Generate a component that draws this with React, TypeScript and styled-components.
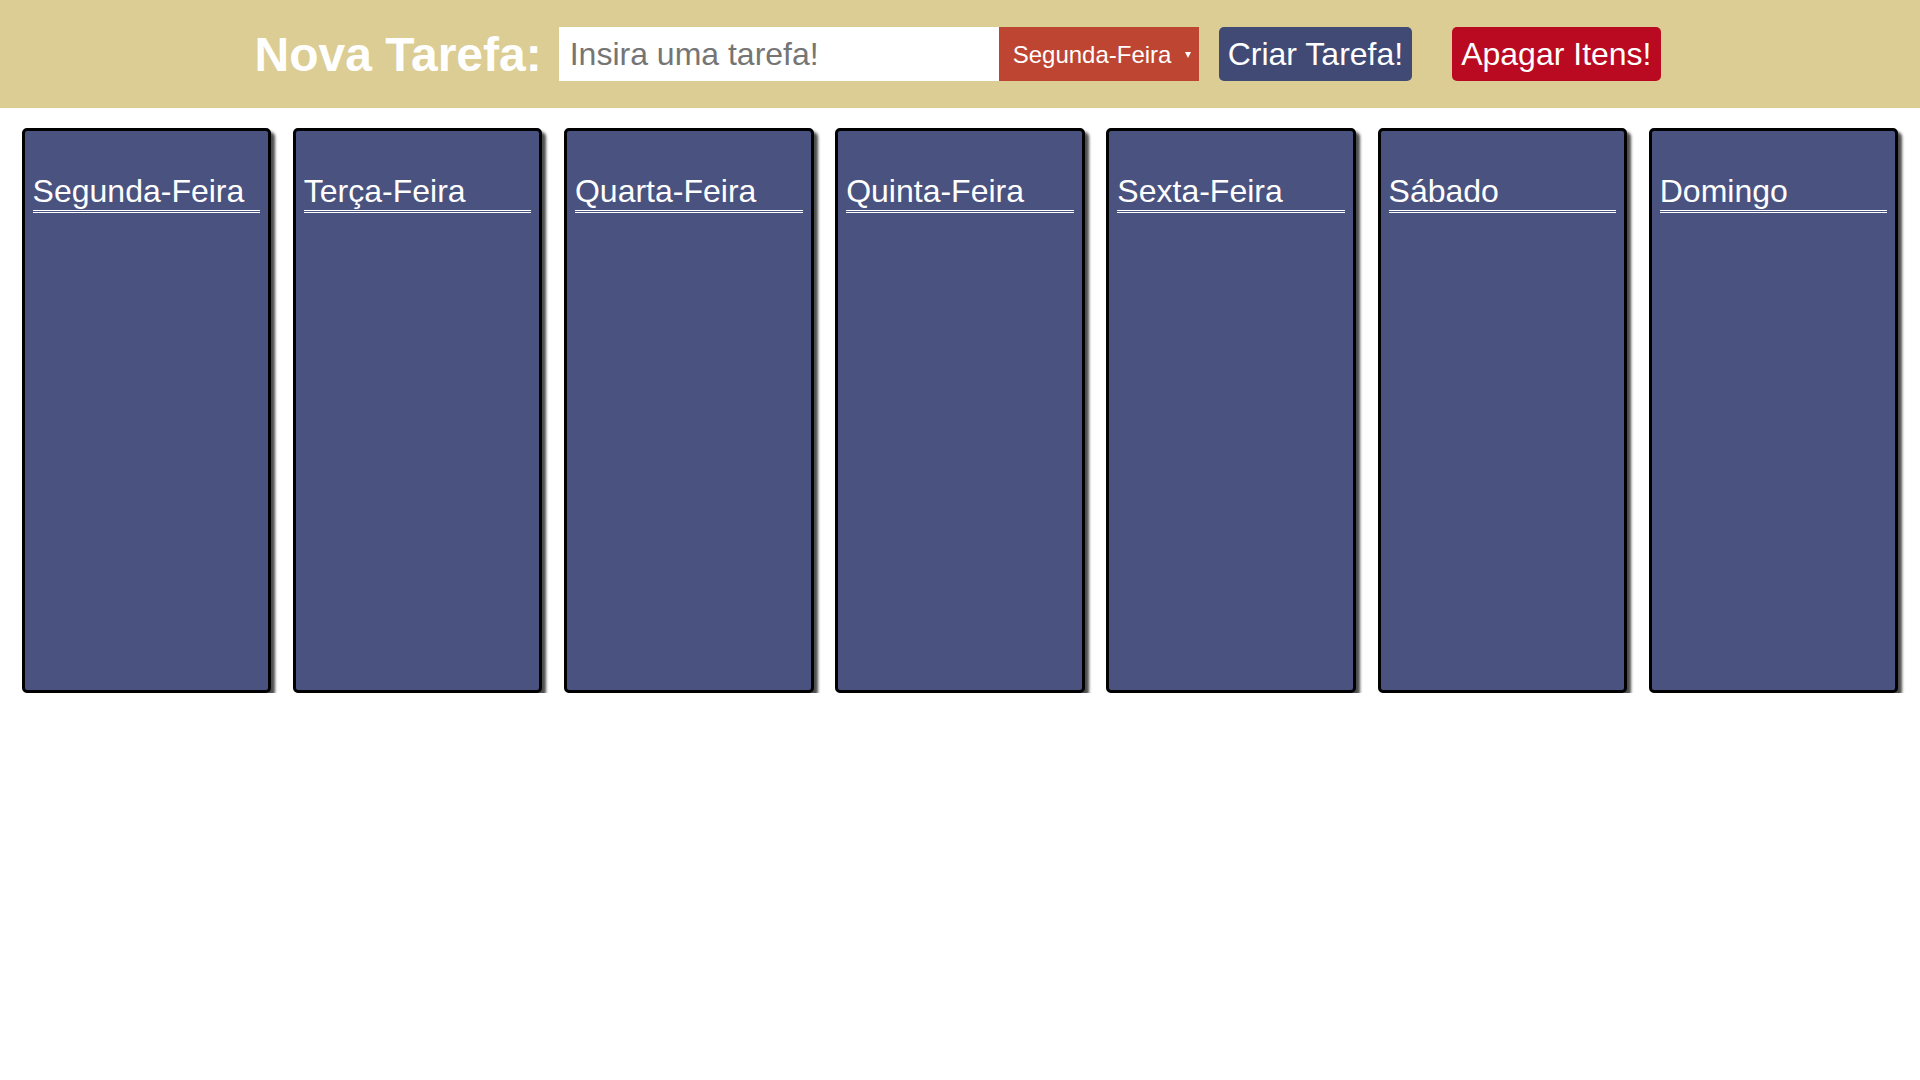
import styled, { createGlobalStyle } from "styled-components";

const GlobalStyle = createGlobalStyle`
  * {
    box-sizing: border-box;
  }

  body {
    margin: 0;
    background: #ffffff;
    font-family: "Liberation Sans", Arial, sans-serif;
  }
`;

const Header = styled.header`
  height: 108px;
  padding-right: 5px;
  background: #dbcd94;
  display: flex;
  align-items: center;
  justify-content: center;
`;

const Title = styled.h1`
  margin: 0 17px 0 0;
  font-size: 48px;
  font-weight: bold;
  color: #ffffff;
`;

const TaskInput = styled.input`
  width: 440px;
  height: 54px;
  border: none;
  border-radius: 0;
  padding: 0 11px;
  font-family: inherit;
  font-size: 32px;
  color: #333;
  background: #ffffff;
  outline: none;

  &::placeholder {
    color: #757575;
  }
`;

const SelectWrap = styled.div`
  position: relative;
  width: 200px;
  height: 54px;

  &::after {
    content: "";
    position: absolute;
    right: 8px;
    top: 25px;
    border-left: 3.5px solid transparent;
    border-right: 3.5px solid transparent;
    border-top: 6px solid #ffffff;
    pointer-events: none;
  }
`;

const DaySelect = styled.select`
  appearance: none;
  width: 100%;
  height: 100%;
  border: none;
  border-radius: 0;
  padding: 0 20px 0 14px;
  background: #bd4531;
  color: #ffffff;
  font-family: inherit;
  font-size: 24px;
  outline: none;
`;

const Button = styled.button<{ $bg: string; $gap: number }>`
  height: 54px;
  margin-left: ${(p) => p.$gap}px;
  padding: 0 9px;
  border: none;
  border-radius: 5px;
  background: ${(p) => p.$bg};
  color: #ffffff;
  font-family: inherit;
  font-size: 32px;
  cursor: pointer;
`;

const Board = styled.main`
  margin-top: 20px;
  display: flex;
  justify-content: space-evenly;
`;

const Column = styled.section`
  width: 13%;
  height: 565px;
  padding: 0 8px;
  background: #4a5280;
  border: 3px solid #000000;
  border-radius: 5px;
  box-shadow: 4px 4px 3px rgba(0, 0, 0, 0.7);
`;

const DayTitle = styled.h2`
  margin: 42px 0 0;
  font-size: 32px;
  font-weight: normal;
  color: #ffffff;
  border-bottom: 3px double #ffffff;
`;

const days = [
  "Segunda-Feira",
  "Terça-Feira",
  "Quarta-Feira",
  "Quinta-Feira",
  "Sexta-Feira",
  "Sábado",
  "Domingo",
];

export default function App() {
  return (
    <>
      <GlobalStyle />
      <Header>
        <Title>Nova Tarefa:</Title>
        <TaskInput placeholder="Insira uma tarefa!" />
        <SelectWrap>
          <DaySelect defaultValue="Segunda-Feira">
            {days.map((d) => (
              <option key={d} value={d}>
                {d}
              </option>
            ))}
          </DaySelect>
        </SelectWrap>
        <Button $bg="#404a75" $gap={20}>
          Criar Tarefa!
        </Button>
        <Button $bg="#b90a22" $gap={40}>
          Apagar Itens!
        </Button>
      </Header>
      <Board>
        {days.map((d) => (
          <Column key={d}>
            <DayTitle>{d}</DayTitle>
          </Column>
        ))}
      </Board>
    </>
  );
}
